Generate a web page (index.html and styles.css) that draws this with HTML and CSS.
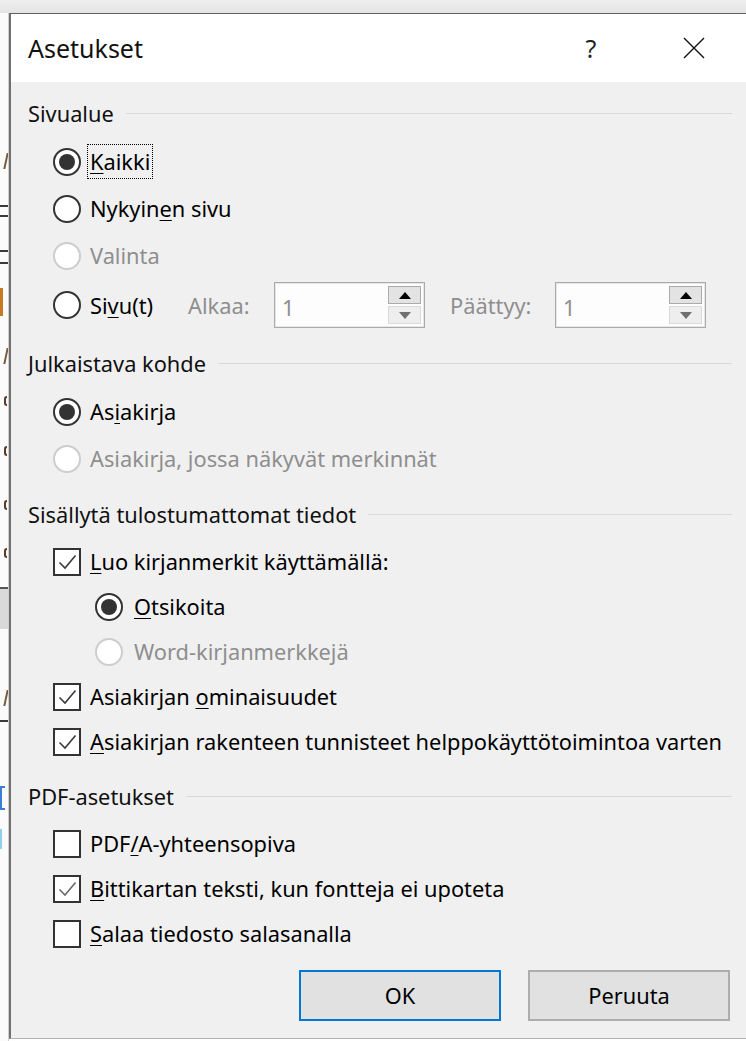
FILE: index.html
```html
<!DOCTYPE html>
<html lang="fi">
<head>
<meta charset="utf-8">
<title>Asetukset</title>
<link rel="stylesheet" href="styles.css">
</head>
<body>
<div class="screen">
  <div class="topstrip"></div>
  <div class="stage">
    <!-- sliver of the document window behind the dialog -->
    <div class="behind" aria-hidden="true">
      <div class="frag slash f1"></div>
      <div class="frag rule f2"></div>
      <div class="frag rule f3"></div>
      <div class="frag rule f4"></div>
      <div class="frag rule f5"></div>
      <div class="frag accent f6"></div>
      <div class="frag slash f7"></div>
      <div class="frag letter f8"></div>
      <div class="frag letter f9"></div>
      <div class="frag letter f10"></div>
      <div class="frag letter f11"></div>
      <div class="frag shade f12"></div>
      <div class="frag slash f13"></div>
      <div class="frag rule f14"></div>
      <div class="frag bracket f15"></div>
      <div class="frag tint f16"></div>
    </div>

    <div class="dialog" role="dialog" aria-labelledby="dlg-title">
      <header class="titlebar">
        <span class="title" id="dlg-title">Asetukset</span>
        <span class="help">?</span>
        <span class="close">
          <svg width="22" height="22" viewBox="0 0 22 22"><path d="M1 1 L21 21 M21 1 L1 21" stroke="#111" stroke-width="1.4" fill="none"/></svg>
        </span>
      </header>

      <div class="content">
        <section class="group">
          <div class="group-head"><span>Sivualue</span><i class="rule-line"></i></div>
          <div class="opt"><span class="radio on"></span><span class="label focus"><u>K</u>aikki</span></div>
          <div class="opt"><span class="radio"></span><span class="label">Nykyin<u>e</u>n sivu</span></div>
          <div class="opt disabled"><span class="radio"></span><span class="label">Valinta</span></div>
          <div class="opt pages">
            <span class="radio"></span><span class="label page-label">Si<u>v</u>u(t)</span>
            <span class="range-label from">Alkaa:</span>
            <span class="spin">
              <span class="spin-value">1</span>
              <span class="spin-btns">
                <span class="spin-btn up"><svg width="12" height="7" viewBox="0 0 12 7"><path d="M0 7 L6 0 L12 7 Z" fill="#000"/></svg></span>
                <span class="spin-btn down"><svg width="12" height="7" viewBox="0 0 12 7"><path d="M0 0 L12 0 L6 7 Z" fill="#707070"/></svg></span>
              </span>
            </span>
            <span class="range-label to">Päättyy:</span>
            <span class="spin">
              <span class="spin-value">1</span>
              <span class="spin-btns">
                <span class="spin-btn up"><svg width="12" height="7" viewBox="0 0 12 7"><path d="M0 7 L6 0 L12 7 Z" fill="#000"/></svg></span>
                <span class="spin-btn down"><svg width="12" height="7" viewBox="0 0 12 7"><path d="M0 0 L12 0 L6 7 Z" fill="#707070"/></svg></span>
              </span>
            </span>
          </div>
        </section>

        <section class="group">
          <div class="group-head"><span>Julkaistava kohde</span><i class="rule-line"></i></div>
          <div class="opt"><span class="radio on"></span><span class="label">As<u>i</u>akirja</span></div>
          <div class="opt disabled"><span class="radio"></span><span class="label">Asiakirja, jossa näkyvät merkinnät</span></div>
        </section>

        <section class="group tight">
          <div class="group-head"><span>Sisällytä tulostumattomat tiedot</span><i class="rule-line"></i></div>
          <div class="opt"><span class="check on"><svg width="24" height="24" viewBox="0 0 24 24"><path d="M4.5 12.5 L10 18 L20.5 5.5" stroke="#3a3a3a" stroke-width="1.6" fill="none"/></svg></span><span class="label"><u>L</u>uo kirjanmerkit käyttämällä:</span></div>
          <div class="opt nested"><span class="radio on"></span><span class="label"><u>O</u>tsikoita</span></div>
          <div class="opt nested disabled"><span class="radio"></span><span class="label">Word-kirjanmerkkejä</span></div>
          <div class="opt"><span class="check on"><svg width="24" height="24" viewBox="0 0 24 24"><path d="M4.5 12.5 L10 18 L20.5 5.5" stroke="#3a3a3a" stroke-width="1.6" fill="none"/></svg></span><span class="label">Asiakirjan <u>o</u>minaisuudet</span></div>
          <div class="opt"><span class="check on"><svg width="24" height="24" viewBox="0 0 24 24"><path d="M4.5 12.5 L10 18 L20.5 5.5" stroke="#3a3a3a" stroke-width="1.6" fill="none"/></svg></span><span class="label"><u>A</u>siakirjan rakenteen tunnisteet helppokäyttötoimintoa varten</span></div>
        </section>

        <section class="group tight">
          <div class="group-head"><span>PDF-asetukset</span><i class="rule-line"></i></div>
          <div class="opt"><span class="check"></span><span class="label">PDF<u>/</u>A-yhteensopiva</span></div>
          <div class="opt"><span class="check on"><svg width="24" height="24" viewBox="0 0 24 24"><path d="M4.5 12.5 L10 18 L20.5 5.5" stroke="#6a6a6a" stroke-width="1.6" fill="none"/></svg></span><span class="label"><u>B</u>ittikartan teksti, kun fontteja ei upoteta</span></div>
          <div class="opt"><span class="check"></span><span class="label"><u>S</u>alaa tiedosto salasanalla</span></div>
        </section>

        <div class="actions">
          <button class="btn default" type="button">OK</button>
          <button class="btn" type="button">Peruuta</button>
        </div>
      </div>
    </div>
  </div>
</div>
</body>
</html>
```

FILE: styles.css
```css
* { box-sizing: border-box; }

html, body { margin: 0; padding: 0; }

body {
  width: 746px;
  height: 1041px;
  overflow: hidden;
  background: #ffffff;
  font-family: "Noto Sans", "Open Sans", sans-serif;
  font-size: 21.8px;
  color: #000;
}

.screen {
  display: flex;
  flex-direction: column;
  height: 100%;
}

.topstrip {
  flex: none;
  height: 13px;
  background: linear-gradient(#eeeeee, #e4e4e4);
}

.stage {
  flex: 1;
  display: flex;
  min-height: 0;
}

/* ---------- document behind the dialog ---------- */
.behind {
  flex: none;
  width: 9px;
  background: #fbfbfb;
  border-right: 1px solid #cfcfcf;
  display: flex;
  flex-direction: column;
  overflow: hidden;
}

.frag { flex: none; }
.frag.slash { width: 2px; height: 16px; margin-left: 5px; background: #7b5a3c; transform: skewX(-12deg); }
.frag.rule { width: 8px; height: 2px; background: #3a3a3a; }
.frag.accent { width: 3px; height: 28px; background: #c87a22; }
.frag.letter { width: 3px; height: 10px; margin-left: 4px; border: 2px solid #5a3b2a; border-right: none; border-radius: 4px 0 0 4px; }
.frag.shade { width: 8px; height: 42px; background: #d9d9d9; border-top: 2px solid #555; }
.frag.bracket { width: 5px; height: 24px; border: 2px solid #3d7fd6; border-right: none; }
.frag.tint { width: 2px; height: 20px; background: #8fd0ea; }

.f1 { margin-top: 140px; }
.f2 { margin-top: 36px; }
.f3 { margin-top: 8px; }
.f4 { margin-top: 33px; }
.f5 { margin-top: 10px; }
.f6 { margin-top: 24px; }
.f7 { margin-top: 32px; }
.f8 { margin-top: 32px; }
.f9 { margin-top: 40px; }
.f10 { margin-top: 44px; }
.f11 { margin-top: 38px; }
.f12 { margin-top: 29px; }
.f13 { margin-top: 61px; }
.f14 { margin-top: 14px; }
.f15 { margin-top: 64px; }
.f16 { margin-top: 19px; }

/* ---------- dialog frame ---------- */
.dialog {
  flex: 1;
  height: 1026px;
  display: flex;
  flex-direction: column;
  background: #f0f0f0;
  border-top: 1px solid #5f5f5f;
  border-left: 2px solid #707070;
  border-bottom: 1px solid #b4b4b4;
}

.titlebar {
  flex: none;
  height: 68px;
  background: #ffffff;
  display: flex;
  align-items: center;
  padding-left: 17px;
  padding-right: 41px;
}

.title {
  flex: 1;
  font-size: 25px;
  color: #111;
}

.help {
  width: 12px;
  text-align: center;
  font-size: 25px;
  color: #222;
  margin-right: 86px;
}

.close {
  width: 22px;
  height: 22px;
  display: flex;
}

.content {
  flex: 1;
  padding: 6px 14px 0 17px;
  display: flex;
  flex-direction: column;
}

/* ---------- option groups ---------- */
.group + .group { margin-top: 7px; }

.group-head {
  height: 50px;
  display: flex;
  align-items: center;
  gap: 12px;
  color: #111;
}

.rule-line {
  flex: 1;
  height: 1px;
  background: #dadada;
}

.opt {
  height: 47px;
  display: flex;
  align-items: center;
  padding-left: 25px;
  gap: 9px;
}

.tight .opt { height: 45px; }

.opt.nested { padding-left: 67px; gap: 11px; }

.opt.pages { height: 52px; }

.label u { text-decoration-thickness: 1px; text-underline-offset: 3px; }

.label.focus {
  margin: 0 -3px;
  padding: 0 2px;
  border: 1px dotted #000;
  height: 35px;
  display: flex;
  align-items: center;
}

.opt.disabled .label { color: #8e8e8e; }

/* radio buttons */
.radio {
  flex: none;
  width: 28px;
  height: 28px;
  border-radius: 50%;
  border: 2px solid #333;
  background: #fff;
  display: flex;
  align-items: center;
  justify-content: center;
}

.radio.on::after {
  content: "";
  width: 16px;
  height: 16px;
  border-radius: 50%;
  background: #333;
}

.opt.disabled .radio { border-color: #cdcdcd; }

/* check boxes */
.check {
  flex: none;
  width: 28px;
  height: 28px;
  border: 2px solid #333;
  background: #fff;
  display: flex;
}

/* page range */
.page-label { width: 89px; flex: none; }

.range-label {
  color: #8e8e8e;
  flex: none;
}
.range-label.from { width: 77px; }
.range-label.to { width: 96px; margin-left: 16px; }

.spin {
  flex: none;
  width: 151px;
  height: 46px;
  display: flex;
  align-items: stretch;
  background: #fdfdfd;
  border: 1px solid #aaaaaa;
  box-shadow: inset 0 0 0 1px #e6e6e6;
  padding: 3px 3px 3px 0;
}

.spin-value {
  flex: 1;
  padding-left: 7px;
  display: flex;
  align-items: center;
  color: #8e8e8e;
  padding-top: 4px;
}

.spin-btns {
  width: 33px;
  display: flex;
  flex-direction: column;
  gap: 2px;
}

.spin-btn {
  flex: 1;
  display: flex;
  align-items: center;
  justify-content: center;
}

.spin-btn.up { background: #e3e3e3; border: 1px solid #ababab; }
.spin-btn.down { background: #eeeeee; border: 1px solid #dadada; }

/* ---------- buttons ---------- */
.actions {
  display: flex;
  justify-content: flex-end;
  gap: 27px;
  margin-top: 14px;
  padding-right: 2px;
}

.btn {
  width: 202px;
  height: 51px;
  font-family: inherit;
  font-size: 21.8px;
  color: #000;
  background: #e1e1e1;
  border: 2px solid #adadad;
  padding: 0;
}

.btn.default { border-color: #0078d7; }
```
